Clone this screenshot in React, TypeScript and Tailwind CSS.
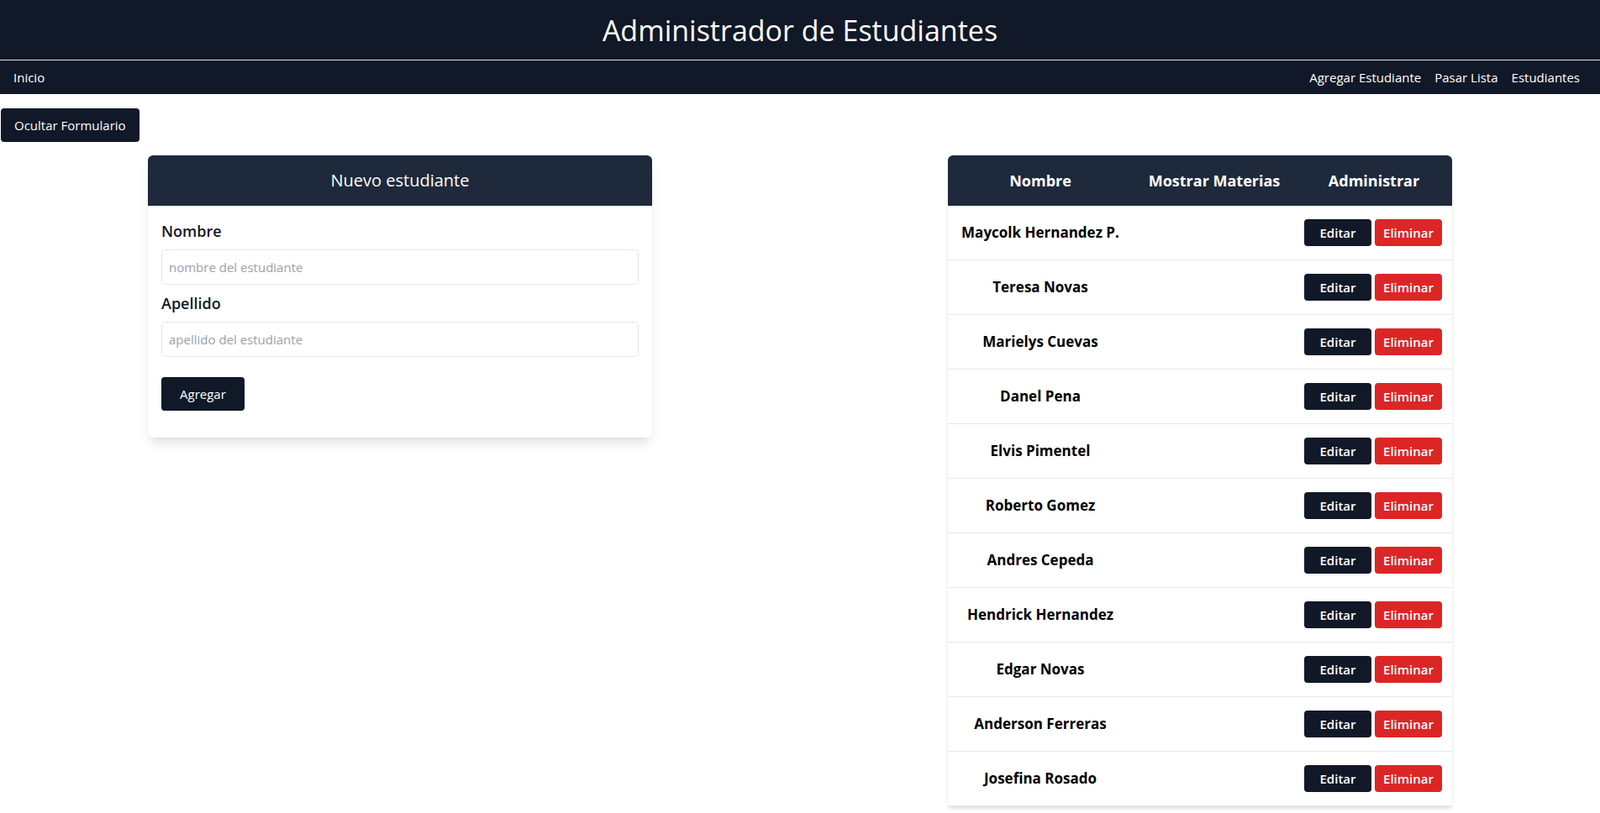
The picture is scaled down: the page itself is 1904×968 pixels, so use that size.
import React from "react";

const estudiantes = [
  "Maycolk Hernandez P.",
  "Teresa Novas",
  "Marielys Cuevas",
  "Danel Pena",
  "Elvis Pimentel",
  "Roberto Gomez",
  "Andres Cepeda",
  "Hendrick Hernandez",
  "Edgar Novas",
  "Anderson Ferreras",
  "Josefina Rosado",
];

const Header: React.FC = () => (
  <header className="bg-[#111827] text-white">
    <div className="border-b border-gray-200 pt-4 pb-[15px] text-center">
      <h1 className="text-[34px] leading-10 font-normal">Administrador de Estudiantes</h1>
    </div>
    <nav className="flex h-10 items-center justify-between pl-4 pr-6 text-[15px]">
      <a href="#">Inicio</a>
      <div className="flex items-center gap-4">
        <a href="#">Agregar Estudiante</a>
        <a href="#">Pasar Lista</a>
        <a href="#">Estudiantes</a>
      </div>
    </nav>
  </header>
);

const FormCard: React.FC = () => (
  <div className="w-[600px] rounded-md bg-white shadow-lg">
    {/* Card title */}
    <div className="rounded-t-md bg-[#1e293b] py-4 text-center text-xl leading-7 text-white">
      Nuevo estudiante
    </div>
    <form className="px-4 pt-4 pb-8">
      <label className="block text-lg leading-7 font-semibold text-gray-900">Nombre</label>
      <input
        className="mt-2 block w-full rounded border border-gray-200 px-2 py-2 text-[15px] leading-6 placeholder:text-gray-400"
        placeholder="nombre del estudiante"
      />
      <label className="mt-2 block text-lg leading-7 font-semibold text-gray-900">Apellido</label>
      <input
        className="mt-2 block w-full rounded border border-gray-200 px-2 py-2 text-[15px] leading-6 placeholder:text-gray-400"
        placeholder="apellido del estudiante"
      />
      <button type="button" className="mt-6 rounded bg-[#111827] px-[22px] py-2 text-[15px] leading-6 text-white">
        Agregar
      </button>
    </form>
  </div>
);

const StudentTable: React.FC = () => (
  <table className="w-[600px] table-fixed border-collapse bg-white shadow-md">
    <thead>
      <tr className="bg-[#1e293b] text-lg leading-7 font-bold text-white">
        <th className="w-[220px] rounded-tl-md py-4">Nombre</th>
        <th className="w-[194px] py-4">Mostrar Materias</th>
        <th className="w-[186px] rounded-tr-md py-4">Administrar</th>
      </tr>
    </thead>
    <tbody>
      {estudiantes.map((nombre) => (
        <tr key={nombre} className="border-b border-gray-200">
          <td className="py-4 text-center text-[17px] leading-6 font-bold text-black">{nombre}</td>
          <td className="py-4"></td>
          <td className="py-4 pl-2.5">
            <div className="flex gap-1">
              <button className="w-20 rounded bg-[#111827] py-1.5 text-[15px] leading-5 font-semibold text-white">
                Editar
              </button>
              <button className="w-20 rounded bg-[#dc2626] py-1.5 text-[15px] leading-5 font-semibold text-white">
                Eliminar
              </button>
            </div>
          </td>
        </tr>
      ))}
    </tbody>
  </table>
);

export default function App() {
  return (
    <div className="min-h-screen bg-white font-['Open_Sans',sans-serif]">
      <Header />
      <button className="mt-[17px] ml-px rounded bg-[#111827] px-4 py-2 text-[15px] leading-6 text-white">
        Ocultar Formulario
      </button>
      <main className="mt-4 grid grid-cols-2 items-start justify-items-center">
        <FormCard />
        <StudentTable />
      </main>
    </div>
  );
}
